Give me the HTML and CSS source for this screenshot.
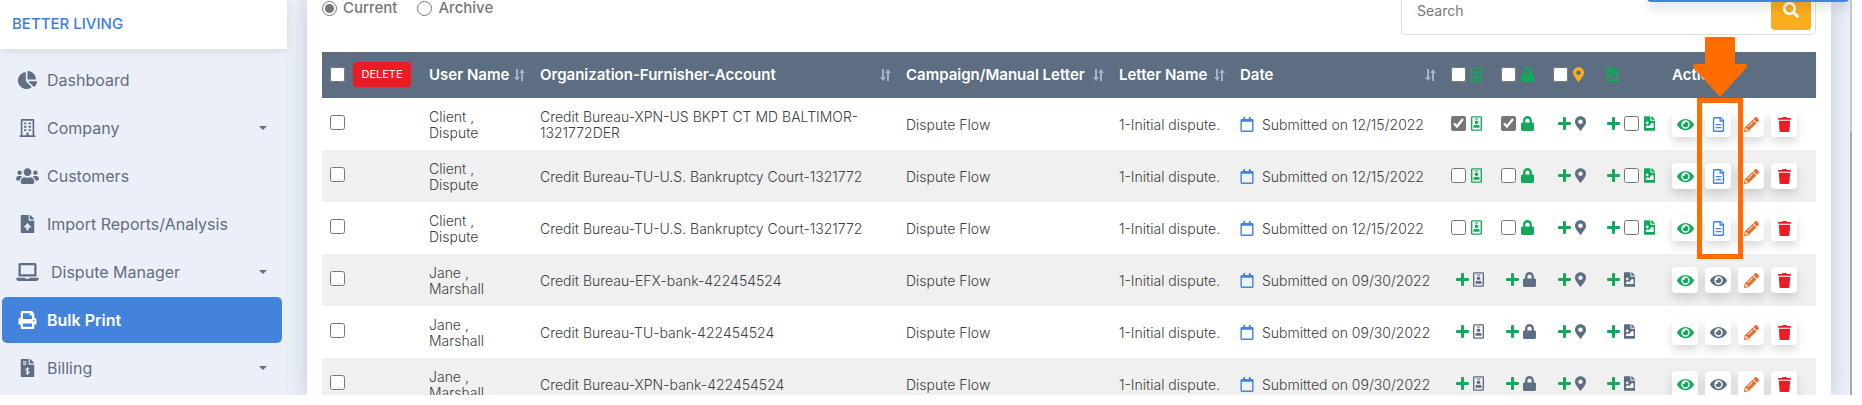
FILE: index.html
```html
<!DOCTYPE html>
<html lang="en">
  <head>
    <meta charset="UTF-8" />
    <meta name="viewport" content="width=device-width, initial-scale=1.0" />
    <title>Bulk Print</title>
    <link rel="stylesheet" href="styles.css">
  </head>
  <body>
    <!-- Icon set -->
    <svg class="sprite" aria-hidden="true">
      <symbol id="i-pie" viewBox="0 0 544 512"><path d="M527.79 288H290.5l158.03 158.03c6.04 6.04 15.98 6.53 22.19.68 38.7-36.46 65.32-85.61 73.13-140.86 1.34-9.46-6.51-17.85-16.06-17.85zm-15.83-64.8C503.72 103.74 408.26 8.28 288.8.04 279.68-.59 272 7.1 272 16.24V240h223.77c9.14 0 16.82-7.68 16.19-16.8zM224 288V50.71c0-9.55-8.39-17.4-17.84-16.06C86.99 51.49-4.1 155.6.14 280.37 4.5 408.51 114.83 513.59 243.03 511.98c50.4-.63 96.97-16.87 135.26-44.03 7.9-5.6 8.42-17.23 1.57-24.08L224 288z" /></symbol>
      <symbol id="i-building" viewBox="0 0 448 512"><path fill-rule="evenodd" d="M32 24Q32 0 56 0H392Q416 0 416 24V464H436Q448 464 448 476V512H0V476Q0 464 12 464H32ZM80 48V464H192V396Q192 384 204 384H244Q256 384 256 396V464H368V48ZM128 96h64v56h-64zM256 96h64v56h-64zM128 192h64v56h-64zM256 192h64v56h-64zM128 288h64v56h-64zM256 288h64v56h-64z" /></symbol>
      <symbol id="i-users" viewBox="0 0 640 512"><path d="M96 224c35.3 0 64-28.7 64-64s-28.7-64-64-64-64 28.7-64 64 28.7 64 64 64zm448 0c35.3 0 64-28.7 64-64s-28.7-64-64-64-64 28.7-64 64 28.7 64 64 64zm32 32h-64c-17.6 0-33.5 7.1-45.1 18.6 40.3 22.1 68.9 62 75.1 109.4h66c17.7 0 32-14.3 32-32v-32c0-35.3-28.7-64-64-64zm-256 0c61.9 0 112-50.1 112-112S381.9 32 320 32 208 82.1 208 144s50.1 112 112 112zm76.8 32h-8.3c-20.8 10-43.9 16-68.5 16s-47.6-6-68.5-16h-8.3C179.6 288 128 339.6 128 403.2V432c0 26.5 21.5 48 48 48h288c26.5 0 48-21.5 48-48v-28.8c0-63.6-51.6-115.2-115.2-115.2zm-223.7-13.4C161.5 263.1 145.6 256 128 256H64c-35.3 0-64 28.7-64 64v32c0 17.7 14.3 32 32 32h65.9c6.3-47.4 34.9-87.3 75.2-109.4z" /></symbol>
      <symbol id="i-upload" viewBox="0 0 384 512"><path fill-rule="evenodd" d="M224 136V0H24C10.7 0 0 10.7 0 24v464c0 13.3 10.7 24 24 24h336c13.3 0 24-10.7 24-24V160H248c-13.2 0-24-10.8-24-24zM192 226L308 352H224V432H160V352H76ZM384 121.9v6.1H256V0h6.1c6.4 0 12.5 2.5 17 7l97.9 98c4.5 4.5 7 10.6 7 16.9z" /></symbol>
      <symbol id="i-laptop" viewBox="0 0 640 512"><path d="M624 416H381.54c-.74 19.81-14.71 32-32.74 32H288c-18.69 0-33.02-17.47-32.77-32H16c-8.8 0-16 7.2-16 16v16c0 35.2 28.8 64 64 64h512c35.2 0 64-28.8 64-64v-16c0-8.8-7.2-16-16-16zM576 48c0-26.4-21.6-48-48-48H112C85.6 0 64 21.6 64 48v336h512V48zm-64 272H128V64h384v256z" /></symbol>
      <symbol id="i-print" viewBox="0 0 512 512"><path d="M448 192V77.25c0-8.49-3.37-16.62-9.37-22.63L393.37 9.37c-6-6-14.14-9.37-22.63-9.37H96C78.33 0 64 14.33 64 32v160c-35.35 0-64 28.65-64 64v112c0 8.84 7.16 16 16 16h48v96c0 17.67 14.33 32 32 32h320c17.67 0 32-14.33 32-32v-96h48c8.84 0 16-7.16 16-16V256c0-35.35-28.65-64-64-64zm-64 256H128v-96h256v96zm0-224H128V64h192v48c0 8.84 7.16 16 16 16h48v96zm48 72c-13.25 0-24-10.75-24-24 0-13.26 10.75-24 24-24s24 10.74 24 24c0 13.25-10.75 24-24 24z" /></symbol>
      <symbol id="i-invoice" viewBox="0 0 384 512"><path fill-rule="evenodd" d="M224 136V0H24C10.7 0 0 10.7 0 24v464c0 13.3 10.7 24 24 24h336c13.3 0 24-10.7 24-24V160H248c-13.2 0-24-10.8-24-24zM64 64h96v32H64zM64 128h96v32H64zM384 121.9v6.1H256V0h6.1c6.4 0 12.5 2.5 17 7l97.9 98c4.5 4.5 7 10.6 7 16.9z" /><path class="cut" d="M244 284C180 250 136 286 154 318C170 344 228 340 238 372C246 410 190 424 140 392M192 236V456" /></symbol>
      <symbol id="i-search" viewBox="0 0 512 512"><path d="M505 442.7L405.3 343c-4.5-4.5-10.6-7-17-7H372c27.6-35.3 44-79.7 44-128C416 93.1 322.9 0 208 0S0 93.1 0 208s93.1 208 208 208c48.3 0 92.7-16.4 128-44v16.3c0 6.4 2.5 12.5 7 17l99.7 99.7c9.4 9.4 24.6 9.4 33.9 0l28.3-28.3c9.4-9.4 9.4-24.6.1-34zM208 336c-70.7 0-128-57.2-128-128 0-70.7 57.2-128 128-128 70.7 0 128 57.2 128 128 0 70.7-57.2 128-128 128z" /></symbol>
      <symbol id="i-sort" viewBox="0 0 11 12"><path d="M2 0h2v8h2L3 12 0 8h2zM7 12h2V4h2L8 0 5 4h2z" /></symbol>
      <symbol id="i-calendar" viewBox="0 0 448 512"><path fill-rule="evenodd" d="M96 12Q96 0 108 0H148Q160 0 160 12V64H288V12Q288 0 300 0H340Q352 0 352 12V64H400Q448 64 448 112V464Q448 512 400 512H48Q0 512 0 464V112Q0 64 48 64H96ZM48 160V458Q48 464 54 464H394Q400 464 400 458V160Z" /></symbol>
      <symbol id="i-badge" viewBox="0 0 384 512"><path fill-rule="evenodd" d="M48 0H336Q384 0 384 48V464Q384 512 336 512H48Q0 512 0 464V48Q0 0 48 0ZM48 48V464H336V48ZM132 84H252V116H132Z" /><circle cx="192" cy="216" r="62" /><path d="M84 406V366Q84 306 140 300Q192 324 244 300Q300 306 300 366V406Z" /></symbol>
      <symbol id="i-lock" viewBox="0 0 448 512"><path d="M400 224h-24v-72C376 68.2 307.8 0 224 0S72 68.2 72 152v72H48c-26.5 0-48 21.5-48 48v192c0 26.5 21.5 48 48 48h352c26.5 0 48-21.5 48-48V272c0-26.5-21.5-48-48-48zm-104 0H152v-72c0-39.7 32.3-72 72-72s72 32.3 72 72v72z" /></symbol>
      <symbol id="i-pin" viewBox="0 0 384 512"><path d="M172.268 501.67C26.97 291.031 0 269.413 0 192 0 85.961 85.961 0 192 0s192 85.961 192 192c0 77.413-26.97 99.031-172.268 309.67-9.535 13.774-29.93 13.773-39.464 0zM192 272c44.183 0 80-35.817 80-80s-35.817-80-80-80-80 35.817-80 80 35.817 80 80 80z" /></symbol>
      <symbol id="i-image" viewBox="0 0 384 512"><path fill-rule="evenodd" d="M224 136V0H24C10.7 0 0 10.7 0 24v464c0 13.3 10.7 24 24 24h336c13.3 0 24-10.7 24-24V160H248c-13.2 0-24-10.8-24-24zM64 416V368L128 304L176 352L288 224L336 272V416ZM112 184a48 48 0 1 0 1 0zM384 121.9v6.1H256V0h6.1c6.4 0 12.5 2.5 17 7l97.9 98c4.5 4.5 7 10.6 7 16.9z" /></symbol>
      <symbol id="i-plus" viewBox="0 0 13 13"><path d="M5 1Q5 0 6 0H7Q8 0 8 1V5H12Q13 5 13 6V7Q13 8 12 8H8V12Q8 13 7 13H6Q5 13 5 12V8H1Q0 8 0 7V6Q0 5 1 5H5Z" /></symbol>
      <symbol id="i-eye" viewBox="0 0 576 512"><path d="M572.52 241.4C518.29 135.59 410.93 64 288 64S57.68 135.64 3.48 241.41a32.35 32.35 0 0 0 0 29.19C57.71 376.41 165.07 448 288 448s230.32-71.64 284.52-177.41a32.35 32.35 0 0 0 0-29.19zM288 400a144 144 0 1 1 144-144 143.93 143.93 0 0 1-144 144zm0-240a95.31 95.31 0 0 0-25.31 3.79 47.85 47.85 0 0 1-66.9 66.9A95.78 95.78 0 1 0 288 160z" /></symbol>
      <symbol id="i-file" viewBox="0 0 384 512"><path fill-rule="evenodd" d="M48 0H252Q272 0 286 14L370 98Q384 112 384 132V464Q384 512 336 512H48Q0 512 0 464V48Q0 0 48 0ZM48 48V464H336V160H248Q224 160 224 136V48ZM272 52V112H332ZM96 240H288V284H96ZM96 340H288V384H96Z" /></symbol>
      <symbol id="i-pencil" viewBox="0 0 512 512"><path d="M497.9 142.1l-46.1 46.1c-4.7 4.7-12.3 4.7-17 0l-111-111c-4.7-4.7-4.7-12.3 0-17l46.1-46.1c18.7-18.7 49.1-18.7 67.9 0l60.1 60.1c18.8 18.7 18.8 49.1 0 67.9zM284.2 99.8L21.6 362.4.4 483.9c-2.9 16.4 11.4 30.6 27.8 27.8l121.5-21.3 262.6-262.6c4.7-4.7 4.7-12.3 0-17l-111-111c-4.8-4.7-12.4-4.7-17.1 0zM124.1 339.9c-5.5-5.5-5.5-14.3 0-19.8l154-154c5.5-5.5 14.3-5.5 19.8 0s5.5 14.3 0 19.8l-154 154c-5.5 5.5-14.3 5.5-19.8 0zM88 424h48v36.3l-64.5 11.3-31.1-31.1L51.7 376H88v48z" /></symbol>
      <symbol id="i-trash" viewBox="0 0 448 512"><path d="M432 32H312l-9.4-18.7A24 24 0 0 0 281.1 0H166.8a23.72 23.72 0 0 0-21.4 13.3L136 32H16A16 16 0 0 0 0 48v32a16 16 0 0 0 16 16h416a16 16 0 0 0 16-16V48a16 16 0 0 0-16-16zM53.2 467a48 48 0 0 0 47.9 45h245.8a48 48 0 0 0 47.9-45L416 128H32z" /></symbol>
    </svg>

    <div class="app">
      <aside class="sidebar">
        <div class="brand">BETTER LIVING</div>
        <nav class="menu">
          <a class="item" href="#"><svg class="nav_icon"><use href="#i-pie" /></svg><span>Dashboard</span></a>
          <a class="item has_sub" href="#"><svg class="nav_icon"><use href="#i-building" /></svg><span>Company</span></a>
          <a class="item" href="#"><svg class="nav_icon"><use href="#i-users" /></svg><span>Customers</span></a>
          <a class="item" href="#"><svg class="nav_icon"><use href="#i-upload" /></svg><span>Import Reports/Analysis</span></a>
          <a class="item has_sub spaced" href="#"><svg class="nav_icon"><use href="#i-laptop" /></svg><span>Dispute Manager</span></a>
          <a class="item active" href="#"><svg class="nav_icon"><use href="#i-print" /></svg><span>Bulk Print</span></a>
          <a class="item has_sub" href="#"><svg class="nav_icon"><use href="#i-invoice" /></svg><span>Billing</span></a>
        </nav>
      </aside>

      <main class="content">
        <div class="toolbar">
          <div class="filters">
            <label><input type="radio" name="status" checked />Current</label>
            <label><input type="radio" name="status" />Archive</label>
          </div>
          <form class="search">
            <input type="text" placeholder="Search" aria-label="Search" />
            <button type="button" aria-label="Search"><svg><use href="#i-search" /></svg></button>
          </form>
        </div>

        <table class="letters">
          <colgroup>
            <col class="c_check" />
            <col class="c_user" />
            <col />
            <col class="c_campaign" />
            <col class="c_letter" />
            <col class="c_date" />
            <col class="c_id" />
            <col class="c_lock" />
            <col class="c_pin" />
            <col class="c_image" />
            <col class="c_actions" />
          </colgroup>
          <thead>
            <tr>
              <th><div class="tools select_all"><input type="checkbox" aria-label="Select all" /><button class="delete" type="button">DELETE</button></div></th>
              <th><div class="sortable">User Name<svg><use href="#i-sort" /></svg></div></th>
              <th><div class="sortable">Organization-Furnisher-Account<svg><use href="#i-sort" /></svg></div></th>
              <th><div class="sortable">Campaign/Manual Letter<svg><use href="#i-sort" /></svg></div></th>
              <th><div class="sortable">Letter Name<svg><use href="#i-sort" /></svg></div></th>
              <th><div class="sortable">Date<svg><use href="#i-sort" /></svg></div></th>
              <th><div class="tools"><input type="checkbox" aria-label="All IDs" /><svg class="icon green"><use href="#i-badge" /></svg></div></th>
              <th><div class="tools"><input type="checkbox" aria-label="All social" /><svg class="icon green big"><use href="#i-lock" /></svg></div></th>
              <th><div class="tools"><input type="checkbox" aria-label="All addresses" /><svg class="icon amber"><use href="#i-pin" /></svg></div></th>
              <th><div class="tools"><svg class="icon green"><use href="#i-image" /></svg></div></th>
              <th>Action</th>
            </tr>
          </thead>
          <tbody>
            <tr>
              <td><div class="tools row_check"><input type="checkbox" aria-label="Select row" /></div></td>
              <td>Client ,<br />Dispute</td>
              <td>Credit Bureau-XPN-US BKPT CT MD BALTIMOR-<wbr />1321772DER</td>
              <td>Dispute Flow</td>
              <td>1-Initial dispute.</td>
              <td><div class="date"><svg><use href="#i-calendar" /></svg>Submitted on 12/15/2022</div></td>
              <td><div class="tools"><input type="checkbox" aria-label="ID" checked /><svg class="icon green"><use href="#i-badge" /></svg></div></td>
              <td><div class="tools"><input type="checkbox" aria-label="Social" checked /><svg class="icon green big"><use href="#i-lock" /></svg></div></td>
              <td><div class="tools indent"><svg class="icon plus"><use href="#i-plus" /></svg><svg class="icon"><use href="#i-pin" /></svg></div></td>
              <td><div class="tools"><svg class="icon plus"><use href="#i-plus" /></svg><input type="checkbox" aria-label="Image" /><svg class="icon green"><use href="#i-image" /></svg></div></td>
              <td><div class="actions"><button class="green" type="button" aria-label="View"><svg><use href="#i-eye" /></svg></button><button class="blue" type="button" aria-label="Document"><svg><use href="#i-file" /></svg></button><button class="orange" type="button" aria-label="Edit"><svg><use href="#i-pencil" /></svg></button><button class="red" type="button" aria-label="Delete"><svg><use href="#i-trash" /></svg></button></div></td>
            </tr>
            <tr>
              <td><div class="tools row_check"><input type="checkbox" aria-label="Select row" /></div></td>
              <td>Client ,<br />Dispute</td>
              <td>Credit Bureau-TU-U.S. Bankruptcy Court-1321772</td>
              <td>Dispute Flow</td>
              <td>1-Initial dispute.</td>
              <td><div class="date"><svg><use href="#i-calendar" /></svg>Submitted on 12/15/2022</div></td>
              <td><div class="tools"><input type="checkbox" aria-label="ID" /><svg class="icon green"><use href="#i-badge" /></svg></div></td>
              <td><div class="tools"><input type="checkbox" aria-label="Social" /><svg class="icon green big"><use href="#i-lock" /></svg></div></td>
              <td><div class="tools indent"><svg class="icon plus"><use href="#i-plus" /></svg><svg class="icon"><use href="#i-pin" /></svg></div></td>
              <td><div class="tools"><svg class="icon plus"><use href="#i-plus" /></svg><input type="checkbox" aria-label="Image" /><svg class="icon green"><use href="#i-image" /></svg></div></td>
              <td><div class="actions"><button class="green" type="button" aria-label="View"><svg><use href="#i-eye" /></svg></button><button class="blue" type="button" aria-label="Document"><svg><use href="#i-file" /></svg></button><button class="orange" type="button" aria-label="Edit"><svg><use href="#i-pencil" /></svg></button><button class="red" type="button" aria-label="Delete"><svg><use href="#i-trash" /></svg></button></div></td>
            </tr>
            <tr>
              <td><div class="tools row_check"><input type="checkbox" aria-label="Select row" /></div></td>
              <td>Client ,<br />Dispute</td>
              <td>Credit Bureau-TU-U.S. Bankruptcy Court-1321772</td>
              <td>Dispute Flow</td>
              <td>1-Initial dispute.</td>
              <td><div class="date"><svg><use href="#i-calendar" /></svg>Submitted on 12/15/2022</div></td>
              <td><div class="tools"><input type="checkbox" aria-label="ID" /><svg class="icon green"><use href="#i-badge" /></svg></div></td>
              <td><div class="tools"><input type="checkbox" aria-label="Social" /><svg class="icon green big"><use href="#i-lock" /></svg></div></td>
              <td><div class="tools indent"><svg class="icon plus"><use href="#i-plus" /></svg><svg class="icon"><use href="#i-pin" /></svg></div></td>
              <td><div class="tools"><svg class="icon plus"><use href="#i-plus" /></svg><input type="checkbox" aria-label="Image" /><svg class="icon green"><use href="#i-image" /></svg></div></td>
              <td><div class="actions"><button class="green" type="button" aria-label="View"><svg><use href="#i-eye" /></svg></button><button class="blue" type="button" aria-label="Document"><svg><use href="#i-file" /></svg></button><button class="orange" type="button" aria-label="Edit"><svg><use href="#i-pencil" /></svg></button><button class="red" type="button" aria-label="Delete"><svg><use href="#i-trash" /></svg></button></div></td>
            </tr>
            <tr>
              <td><div class="tools row_check"><input type="checkbox" aria-label="Select row" /></div></td>
              <td>Jane ,<br />Marshall</td>
              <td>Credit Bureau-EFX-bank-422454524</td>
              <td>Dispute Flow</td>
              <td>1-Initial dispute.</td>
              <td><div class="date"><svg><use href="#i-calendar" /></svg>Submitted on 09/30/2022</div></td>
              <td><div class="tools indent"><svg class="icon plus"><use href="#i-plus" /></svg><svg class="icon"><use href="#i-badge" /></svg></div></td>
              <td><div class="tools indent"><svg class="icon plus"><use href="#i-plus" /></svg><svg class="icon big"><use href="#i-lock" /></svg></div></td>
              <td><div class="tools indent"><svg class="icon plus"><use href="#i-plus" /></svg><svg class="icon"><use href="#i-pin" /></svg></div></td>
              <td><div class="tools"><svg class="icon plus"><use href="#i-plus" /></svg><svg class="icon"><use href="#i-image" /></svg></div></td>
              <td><div class="actions"><button class="green" type="button" aria-label="View"><svg><use href="#i-eye" /></svg></button><button type="button" aria-label="Preview"><svg><use href="#i-eye" /></svg></button><button class="orange" type="button" aria-label="Edit"><svg><use href="#i-pencil" /></svg></button><button class="red" type="button" aria-label="Delete"><svg><use href="#i-trash" /></svg></button></div></td>
            </tr>
            <tr>
              <td><div class="tools row_check"><input type="checkbox" aria-label="Select row" /></div></td>
              <td>Jane ,<br />Marshall</td>
              <td>Credit Bureau-TU-bank-422454524</td>
              <td>Dispute Flow</td>
              <td>1-Initial dispute.</td>
              <td><div class="date"><svg><use href="#i-calendar" /></svg>Submitted on 09/30/2022</div></td>
              <td><div class="tools indent"><svg class="icon plus"><use href="#i-plus" /></svg><svg class="icon"><use href="#i-badge" /></svg></div></td>
              <td><div class="tools indent"><svg class="icon plus"><use href="#i-plus" /></svg><svg class="icon big"><use href="#i-lock" /></svg></div></td>
              <td><div class="tools indent"><svg class="icon plus"><use href="#i-plus" /></svg><svg class="icon"><use href="#i-pin" /></svg></div></td>
              <td><div class="tools"><svg class="icon plus"><use href="#i-plus" /></svg><svg class="icon"><use href="#i-image" /></svg></div></td>
              <td><div class="actions"><button class="green" type="button" aria-label="View"><svg><use href="#i-eye" /></svg></button><button type="button" aria-label="Preview"><svg><use href="#i-eye" /></svg></button><button class="orange" type="button" aria-label="Edit"><svg><use href="#i-pencil" /></svg></button><button class="red" type="button" aria-label="Delete"><svg><use href="#i-trash" /></svg></button></div></td>
            </tr>
            <tr>
              <td><div class="tools row_check"><input type="checkbox" aria-label="Select row" /></div></td>
              <td>Jane ,<br />Marshall</td>
              <td>Credit Bureau-XPN-bank-422454524</td>
              <td>Dispute Flow</td>
              <td>1-Initial dispute.</td>
              <td><div class="date"><svg><use href="#i-calendar" /></svg>Submitted on 09/30/2022</div></td>
              <td><div class="tools indent"><svg class="icon plus"><use href="#i-plus" /></svg><svg class="icon"><use href="#i-badge" /></svg></div></td>
              <td><div class="tools indent"><svg class="icon plus"><use href="#i-plus" /></svg><svg class="icon big"><use href="#i-lock" /></svg></div></td>
              <td><div class="tools indent"><svg class="icon plus"><use href="#i-plus" /></svg><svg class="icon"><use href="#i-pin" /></svg></div></td>
              <td><div class="tools"><svg class="icon plus"><use href="#i-plus" /></svg><svg class="icon"><use href="#i-image" /></svg></div></td>
              <td><div class="actions"><button class="green" type="button" aria-label="View"><svg><use href="#i-eye" /></svg></button><button type="button" aria-label="Preview"><svg><use href="#i-eye" /></svg></button><button class="orange" type="button" aria-label="Edit"><svg><use href="#i-pencil" /></svg></button><button class="red" type="button" aria-label="Delete"><svg><use href="#i-trash" /></svg></button></div></td>
            </tr>
          </tbody>
        </table>

        <!-- Callout on the document button -->
        <svg class="arrow" viewBox="0 0 54 60"><path d="M12 1Q12 0 13 0H41Q42 0 42 1V27H52Q54 27 54 30L27 60 0 30Q0 27 2 27H12Z" /></svg>
        <div class="callout"></div>
      </main>
      <div class="top_panel"></div>
      <div class="scrollbar"><div class="thumb"></div></div>
    </div>
  </body>
</html>
```
FILE: styles.css
```css
* {
  box-sizing: border-box;
}

body {
  margin: 0;
  height: 100vh;
  overflow: hidden;
  background-color: #ffffff;
  color: #404040;
  font-family: Inter, "Open Sans", sans-serif;
  font-size: 14px;
  line-height: 16px;
}

svg {
  display: block;
  fill: currentColor;
  flex: none;
}

.sprite {
  position: absolute;
  width: 0;
  height: 0;
}

.app {
  position: relative;
  display: flex;
  height: calc(100vh - 10px);
  margin-right: 10px;
  overflow: hidden;
  background-color: #ebf0f8;
}

/* Sidebar */
.sidebar {
  flex: none;
  width: 307px;
  padding-right: 20px;
}

.brand {
  height: 49px;
  padding: 16px 12px;
  background-color: #ffffff;
  box-shadow: 0 2px 8px rgba(90, 107, 130, 0.15);
  color: #3a80e0;
  font-size: 15px;
  font-weight: 500;
}

.menu {
  display: flex;
  flex-direction: column;
  gap: 2px;
  padding: 8px 5px 0 2px;
}

.item {
  display: flex;
  align-items: center;
  gap: 8px;
  height: 46px;
  padding: 0 15px 0 14px;
  border-radius: 5px;
  color: #5f6e83;
  font-size: 16px;
  line-height: 20px;
  text-decoration: none;
}

.nav_icon {
  width: 23px;
  height: 18px;
}

.has_sub::after {
  content: "";
  margin-left: auto;
  border: 4px solid transparent;
  border-top-color: currentColor;
  border-bottom: 0;
}

.spaced {
  gap: 12px;
}

.active {
  background-color: #4383db;
  color: #ffffff;
  font-weight: 600;
}

.cut {
  fill: none;
  stroke: #ebf0f8;
  stroke-width: 30;
}

/* Main card */
.content {
  position: relative;
  flex: 1;
  margin-right: 21px;
  padding: 0 15px;
  background-color: #ffffff;
  box-shadow: 0 0 20px rgba(60, 85, 125, 0.25);
}

.toolbar {
  display: flex;
  justify-content: space-between;
  height: 52px;
}

.filters {
  display: flex;
  gap: 20px;
  height: 16px;
}

.filters label {
  display: flex;
  align-items: center;
  gap: 6px;
  color: #777777;
  font-size: 15px;
  font-weight: 500;
}

input[type="checkbox"],
input[type="radio"] {
  flex: none;
  width: 15px;
  height: 15px;
  margin: 0;
  accent-color: #767676;
}

.search {
  display: flex;
  width: 415px;
  height: 35px;
  padding: 0 4px 4px 15px;
  border: 1px solid #dedede;
  border-top: 0;
  border-radius: 0 0 5px 5px;
}

.search input {
  flex: 1;
  min-width: 0;
  height: 20px;
  padding: 0;
  border: 0;
  outline: 0;
  font: inherit;
}

.search input::placeholder {
  color: #777777;
}

.search button {
  display: flex;
  justify-content: center;
  width: 40px;
  height: 30px;
  padding: 2px 0 0;
  border: 0;
  border-radius: 0 0 4px 4px;
  background-color: #fbae1c;
  color: #ffffff;
}

.search svg {
  width: 16px;
  height: 16px;
}

/* Letters table */
.letters {
  width: 100%;
  border-collapse: collapse;
  table-layout: fixed;
}

.c_check { width: 99px; }
.c_user { width: 111px; }
.c_campaign { width: 213px; }
.c_letter { width: 121px; }
.c_date { width: 211px; }
.c_id { width: 50px; }
.c_lock { width: 52px; }
.c_pin { width: 54px; }
.c_image { width: 65px; }
.c_actions { width: 152px; }

th {
  height: 46px;
  padding: 0 8px;
  background-color: #5d6d82;
  color: #ffffff;
  font-size: 15px;
  font-weight: 600;
  text-align: left;
  white-space: nowrap;
}

td {
  height: 52px;
  padding: 1px 8px 0;
  font-weight: 300;
}

tbody tr:nth-child(even) {
  background-color: #f0f0f0;
}

.sortable {
  display: flex;
  align-items: center;
  justify-content: space-between;
}

.sortable svg {
  width: 11px;
  height: 12px;
  margin-right: -1px;
  color: #a6b3c6;
}

.tools {
  display: flex;
  align-items: center;
  gap: 5px;
  padding-bottom: 2px;
  color: #5d6d82;
}

.row_check {
  padding-bottom: 4px;
}

.select_all {
  gap: 8px;
}

.indent {
  padding-left: 5px;
}

.icon {
  width: 11px;
  height: 15px;
}

.big {
  width: 13px;
}

.plus {
  width: 13px;
  height: 13px;
  margin-right: -1px;
  color: #13a85b;
}

.delete {
  width: 58px;
  height: 25px;
  padding: 0;
  border: 0;
  border-radius: 4px;
  background-color: #ed1c24;
  color: #ffffff;
  font-family: inherit;
  font-size: 11px;
  font-weight: 400;
}

.date {
  display: flex;
  align-items: center;
  gap: 8px;
  white-space: nowrap;
}

.date svg {
  width: 14px;
  height: 15px;
  color: #4383db;
}

.actions {
  display: flex;
  gap: 7px;
  padding-bottom: 1px;
}

.actions button {
  display: flex;
  align-items: center;
  justify-content: center;
  width: 26px;
  height: 26px;
  padding: 0;
  border: 0;
  border-radius: 4px;
  background-color: #ffffff;
  box-shadow: 0 5px 10px rgba(0, 0, 0, 0.15);
  color: #5d6d82;
}

.actions svg {
  width: 17px;
  height: 15px;
}

.green,
.actions .green {
  color: #13a85b;
}

.amber {
  color: #fbae1c;
}

.actions .blue {
  color: #4383db;
}

.actions .orange {
  color: #f26a2a;
}

.actions .red {
  color: #ed1c24;
}

/* Overlays */
.arrow {
  position: absolute;
  top: 37px;
  right: 84px;
  width: 54px;
  height: 60px;
  color: #ff6d00;
}

.callout {
  position: absolute;
  top: 98px;
  right: 88px;
  width: 46px;
  height: 161px;
  border: 5px solid #ff6d00;
}

.top_panel {
  position: absolute;
  top: -4px;
  right: 3px;
  width: 202px;
  height: 6px;
  border-radius: 0 0 4px 4px;
  background-color: #4383db;
  box-shadow: 0 4px 12px rgba(0, 0, 0, 0.2);
}

.scrollbar {
  position: absolute;
  top: 0;
  right: 0;
  width: 2px;
  height: 100%;
  background-color: #c8c8c8;
}

.thumb {
  height: 100%;
  margin-top: 132px;
  background-color: #a9a9a9;
}
```
